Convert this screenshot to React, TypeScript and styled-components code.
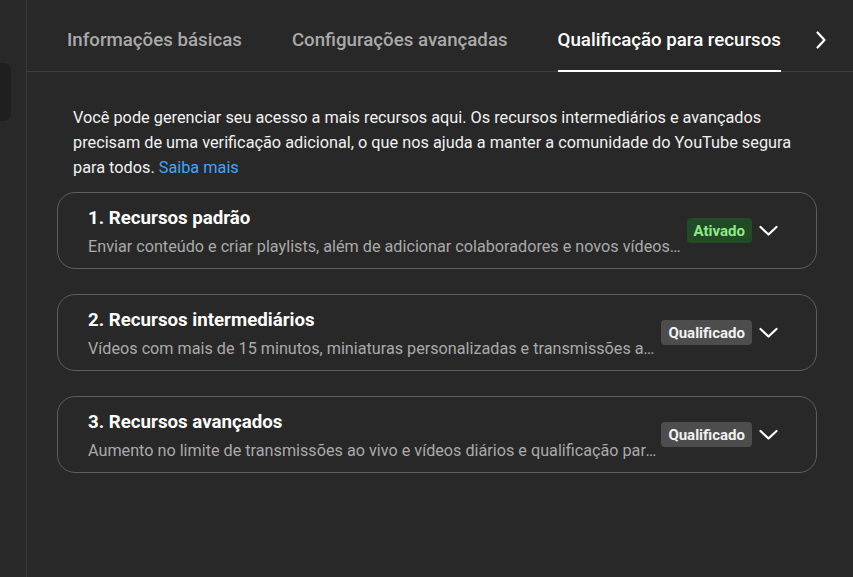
import React from "react";
import styled, { createGlobalStyle } from "styled-components";

const Global = createGlobalStyle`
  html, body { margin: 0; padding: 0; background: #282828; }
  body { font-family: Roboto, "Noto Sans", Arial, sans-serif; color: #f1f1f1; }
  * { box-sizing: border-box; }
`;

const Page = styled.div`
  display: flex;
  width: 853px;
  height: 577px;
  background: #282828;
  overflow: hidden;
`;

const Sidebar = styled.div`
  width: 27px;
  flex: none;
  border-right: 1px solid #3a3a3a;
  padding-top: 63px;
`;

const SideItem = styled.div`
  width: 11px;
  height: 58px;
  background: #1f1f1f;
  border-radius: 0 8px 8px 0;
`;

const Main = styled.div`
  flex: 1;
  display: flex;
  flex-direction: column;
  min-width: 0;
`;

const TabBar = styled.div`
  height: 72px;
  display: flex;
  align-items: stretch;
  padding-left: 40px;
  border-bottom: 1px solid #3e3e3e;
`;

const Tab = styled.div<{ $active?: boolean }>`
  display: flex;
  align-items: center;
  margin-right: 50px;
  font-size: 18.7px;
  font-weight: 500;
  white-space: nowrap;
  color: ${(p) => (p.$active ? "#ffffff" : "#aaaaaa")};
  border-bottom: 2px solid ${(p) => (p.$active ? "#ffffff" : "transparent")};
  padding-top: 9px;
  margin-bottom: -1px;
`;

const TabArrow = styled.div`
  display: flex;
  align-items: center;
  padding-top: 9px;
  margin-left: -20px;
  color: #fff;
`;

const Content = styled.div`
  padding: 33px 36px 0 30px;
`;

const Intro = styled.p`
  margin: 0 0 12px 16px;
  font-size: 16.3px;
  line-height: 25px;
  color: #f1f1f1;
`;

const Link = styled.a`
  color: #3ea6ff;
  text-decoration: none;
`;

const CardList = styled.div`
  display: flex;
  flex-direction: column;
  gap: 25px;
`;

const Card = styled.div`
  height: 77px;
  border: 1px solid #5e5e5e;
  border-radius: 18px;
  display: flex;
  align-items: center;
  padding: 0 38px 0 30px;
`;

const CardText = styled.div`
  flex: 1;
  min-width: 0;
  align-self: stretch;
  display: flex;
  flex-direction: column;
  padding-top: 12px;
`;

const CardTitle = styled.div`
  font-size: 18.7px;
  font-weight: 700;
  line-height: 26px;
  color: #fff;
`;

const CardDesc = styled.div`
  margin-top: 4px;
  font-size: 16.2px;
  line-height: 24px;
  color: #aaaaaa;
  white-space: nowrap;
  overflow: hidden;
  text-overflow: ellipsis;
`;

const Badge = styled.span<{ $tone: "green" | "gray" }>`
  flex: none;
  margin-left: 4px;
  height: 25px;
  padding: 0 7px;
  border-radius: 4px;
  display: inline-flex;
  align-items: center;
  font-size: 15px;
  font-weight: 700;
  background: ${(p) => (p.$tone === "green" ? "#224a24" : "#4d4d4d")};
  color: ${(p) => (p.$tone === "green" ? "#8ee98a" : "#f1f1f1")};
`;

const Chevron = styled.div`
  flex: none;
  margin-left: 7px;
  display: flex;
  align-items: center;
  color: #fff;
`;

const ChevronDown = () => (
  <svg width="19" height="18" viewBox="0 0 19 18" fill="none">
    <path d="M1.5 5 L9.5 12.5 L17.5 5" stroke="currentColor" strokeWidth="2.2" strokeLinecap="round" strokeLinejoin="round" />
  </svg>
);

const ChevronRight = () => (
  <svg width="18" height="20" viewBox="0 0 18 20" fill="none">
    <path d="M6.5 2.5 L13.5 10 L6.5 17.5" stroke="currentColor" strokeWidth="2.2" strokeLinecap="round" strokeLinejoin="round" />
  </svg>
);

const cards = [
  {
    title: "1. Recursos padrão",
    desc: "Enviar conteúdo e criar playlists, além de adicionar colaboradores e novos vídeos a playlists colaborativas",
    badge: "Ativado",
    tone: "green" as const,
  },
  {
    title: "2. Recursos intermediários",
    desc: "Vídeos com mais de 15 minutos, miniaturas personalizadas e transmissões ao vivo",
    badge: "Qualificado",
    tone: "gray" as const,
  },
  {
    title: "3. Recursos avançados",
    desc: "Aumento no limite de transmissões ao vivo e vídeos diários e qualificação para o Programa de Parcerias",
    badge: "Qualificado",
    tone: "gray" as const,
  },
];

export default function App() {
  return (
    <>
      <Global />
      <Page>
        <Sidebar>
          <SideItem />
        </Sidebar>
        <Main>
          <TabBar>
            <Tab>Informações básicas</Tab>
            <Tab>Configurações avançadas</Tab>
            <Tab $active>Qualificação para recursos</Tab>
            <TabArrow>
              <ChevronRight />
            </TabArrow>
          </TabBar>
          <Content>
            <Intro>
              Você pode gerenciar seu acesso a mais recursos aqui. Os recursos intermediários e avançados
              precisam de uma verificação adicional, o que nos ajuda a manter a comunidade do YouTube segura
              para todos. <Link href="#">Saiba mais</Link>
            </Intro>
            <CardList>
              {cards.map((c) => (
                <Card key={c.title}>
                  <CardText>
                    <CardTitle>{c.title}</CardTitle>
                    <CardDesc>{c.desc}</CardDesc>
                  </CardText>
                  <Badge $tone={c.tone}>{c.badge}</Badge>
                  <Chevron>
                    <ChevronDown />
                  </Chevron>
                </Card>
              ))}
            </CardList>
          </Content>
        </Main>
      </Page>
    </>
  );
}
